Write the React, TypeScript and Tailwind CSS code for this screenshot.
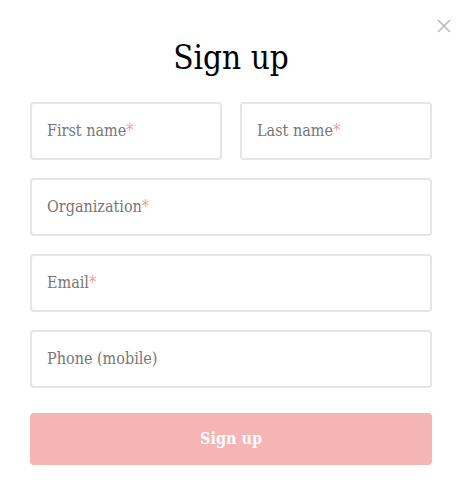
import React from "react";

const font = { fontFamily: '"DejaVu Serif Condensed", "DejaVu Serif", serif' };

function Field({ label, required, className = "" }: { label: string; required?: boolean; className?: string }) {
  return (
    <div className={`h-[58px] border-2 border-[#e6e6e6] rounded-[4px] flex items-center px-[15px] ${className}`}>
      <span className="text-[16px] text-[#777777]">
        {label}
        {required && <span className="text-[#f29a9a]">*</span>}
      </span>
    </div>
  );
}

export default function App() {
  return (
    <div className="w-[468px] h-[493px] bg-white relative" style={font}>
      <button className="absolute left-[437px] top-[19px] w-[14px] h-[14px]" aria-label="close">
        <svg width="14" height="14" viewBox="0 0 14 14">
          <path d="M1 1 L13 13 M13 1 L1 13" stroke="#bbbbbb" strokeWidth="1.6" />
        </svg>
      </button>
      <div className="pl-[30px] pr-[36px] pt-[34px] flex flex-col">
        <h1 className="text-[33px] leading-[48px] text-black text-center font-normal">Sign up</h1>
        <div className="mt-[20px] flex flex-col gap-[18px]">
          <div className="flex gap-[18px]">
            <Field label="First name" required className="flex-1" />
            <Field label="Last name" required className="flex-1" />
          </div>
          <Field label="Organization" required />
          <Field label="Email" required />
          <Field label="Phone (mobile)" />
        </div>
        <button className="mt-[25px] h-[52px] rounded-[4px] bg-[#f5b5b5] text-white text-[16px] font-bold" style={font}>
          Sign up
        </button>
      </div>
    </div>
  );
}
